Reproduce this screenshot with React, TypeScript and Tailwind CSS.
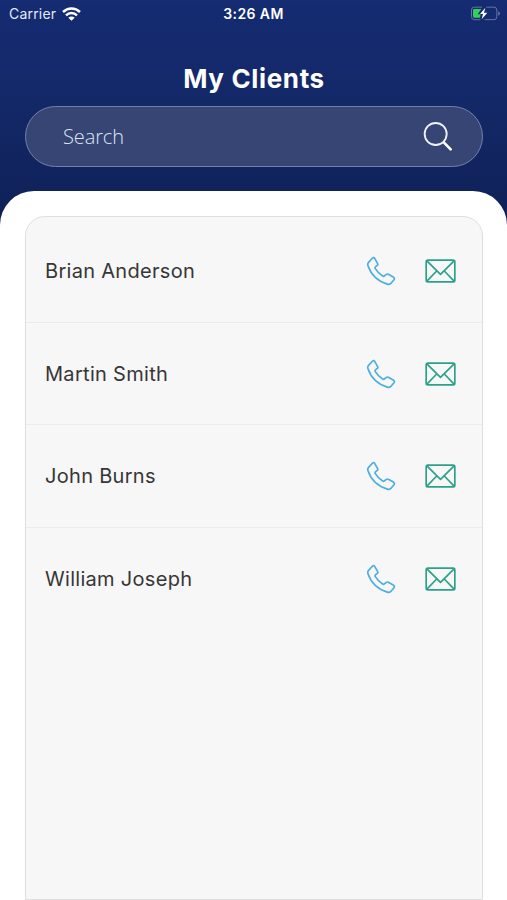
import { memo } from 'react';

interface Client {
  id: number;
  name: string;
}

const clients: Client[] = [
  { id: 1, name: 'Brian Anderson' },
  { id: 2, name: 'Martin Smith' },
  { id: 3, name: 'John Burns' },
  { id: 4, name: 'William Joseph' },
];

function WifiIcon() {
  return (
    <svg className="w-[19px] h-[14px]" viewBox="0 0 57 42" fill="none" stroke="#fff" strokeWidth="7.500">
      <path d="M3 15C17.500 1 39.500 1 54 15" />
      <path d="M12 25C21.500 16 35.500 16 45 25" />
      <path d="M28.500 41L19 32C24.500 27 32.500 27 38 32Z" fill="#fff" stroke="none" />
    </svg>
  );
}

function BatteryIcon() {
  return (
    <svg className="w-[30px] h-[15px]" viewBox="0 0 90 45" fill="none">
      <path
        d="M36 3.500H13Q4.500 3.500 4.500 12V32Q4.500 41 13 41H31M49 3.500H72Q80.500 3.500 80.500 12V32Q80.500 41 72 41H44"
        stroke="#66759f"
        strokeWidth="3"
      />
      <path d="M84.500 16Q90 18 90 22.500T84.500 29Z" fill="#66759f" />
      <path d="M13 9H34L23 25H32L30 35H13Q9 35 9 31V13Q9 9 13 9Z" fill="#33d158" />
      <path d="M46 5L30 24H39L35 40L52 20H42Z" fill="#fff" />
    </svg>
  );
}

function SearchIcon() {
  return (
    <svg className="w-[30px] h-[30px]" viewBox="0 0 90 90" fill="none" stroke="#fff" strokeLinecap="round">
      <circle cx="38" cy="36" r="33" strokeWidth="5.500" stroke="#eef2fc" />
      <path d="M63 62L83 82" strokeWidth="8" />
    </svg>
  );
}

function PhoneIcon() {
  return (
    <svg
      className="w-[30px] h-[30px]"
      viewBox="0 0 90 90"
      fill="none"
      stroke="#4aaee0"
      strokeWidth="5"
      strokeLinejoin="round"
    >
      <path d="M20 6Q23 3 26 7L35 23Q37 26 34 28L29 32Q26 34 28 38C34 48 41 55 50 60Q53 62 56 59L61 55Q64 53 67 55L83 64Q87 67 84 71L75 82Q72 86 66 85C36 76 15 56 6 29Q4 24 7 20Z" />
    </svg>
  );
}

function MailIcon() {
  return (
    <svg
      className="w-[31px] h-[24px]"
      viewBox="0 0 93 72"
      fill="none"
      stroke="#2ca18a"
      strokeWidth="5"
      strokeLinejoin="round"
    >
      <rect x="3.500" y="3.500" width="86" height="65" rx="5" />
      <path d="M5 5L46.500 46L88 5M5 67L35 36M88 67L58 36" />
    </svg>
  );
}

const StatusBar = memo(function StatusBar() {
  return (
    <div className="grid grid-cols-3 items-center h-[27px] pl-[9px] pr-[7px] text-white">
      <div className="flex items-center gap-[6px]">
        <span className="text-[14px] tracking-[0.2px] text-[#e4e9f6]">Carrier</span>
        <WifiIcon />
      </div>
      <p className="-ml-[2px] text-center text-[14px] font-semibold tracking-[0.4px]">3:26 AM</p>
      <div className="flex justify-end">
        <BatteryIcon />
      </div>
    </div>
  );
});

const ClientRow = memo(function ClientRow({ name }: { name: string }) {
  return (
    <li className="flex items-center h-[102.700px] pl-[19px] pr-[26px] border-b border-[#ebebeb] last:border-b-0">
      <span className="flex-1 text-[20px] tracking-[0.3px] text-[#363636]">{name}</span>
      <button className="mr-[29px]" aria-label="Call">
        <PhoneIcon />
      </button>
      <button aria-label="Email">
        <MailIcon />
      </button>
    </li>
  );
});

export default function App() {
  return (
    <div className="flex flex-col h-screen overflow-hidden bg-linear-to-b from-[#152b72] from-0% via-[#142969] via-10% to-[#0f2057] to-25% font-['Inter',sans-serif]">
      <StatusBar />
      <header className="pl-[25px] pr-[24px] pt-[33px] pb-[24px]">
        <h1 className="h-[36px] mb-[10px] pt-px text-center text-[26px] leading-[36px] font-bold tracking-[0.65px] text-white">
          My Clients
        </h1>
        <div className="flex items-center justify-between h-[61px] pl-[37px] pr-[29px] rounded-full border border-[#7180aa] bg-[#364574]">
          <span className="font-['Open_Sans',sans-serif] text-[20px] font-light tracking-[-0.1px] text-[#dce4f5]">
            Search
          </span>
          <SearchIcon />
        </div>
      </header>
      <main className="flex-1 pl-[25px] pr-[24px] pt-[25px] rounded-t-[34px] bg-white">
        <ul className="h-full pt-[3px] rounded-t-[20px] border border-[#dfdfdf] bg-[#f7f7f7]">
          {clients.map((client) => (
            <ClientRow key={client.id} name={client.name} />
          ))}
        </ul>
      </main>
    </div>
  );
}
